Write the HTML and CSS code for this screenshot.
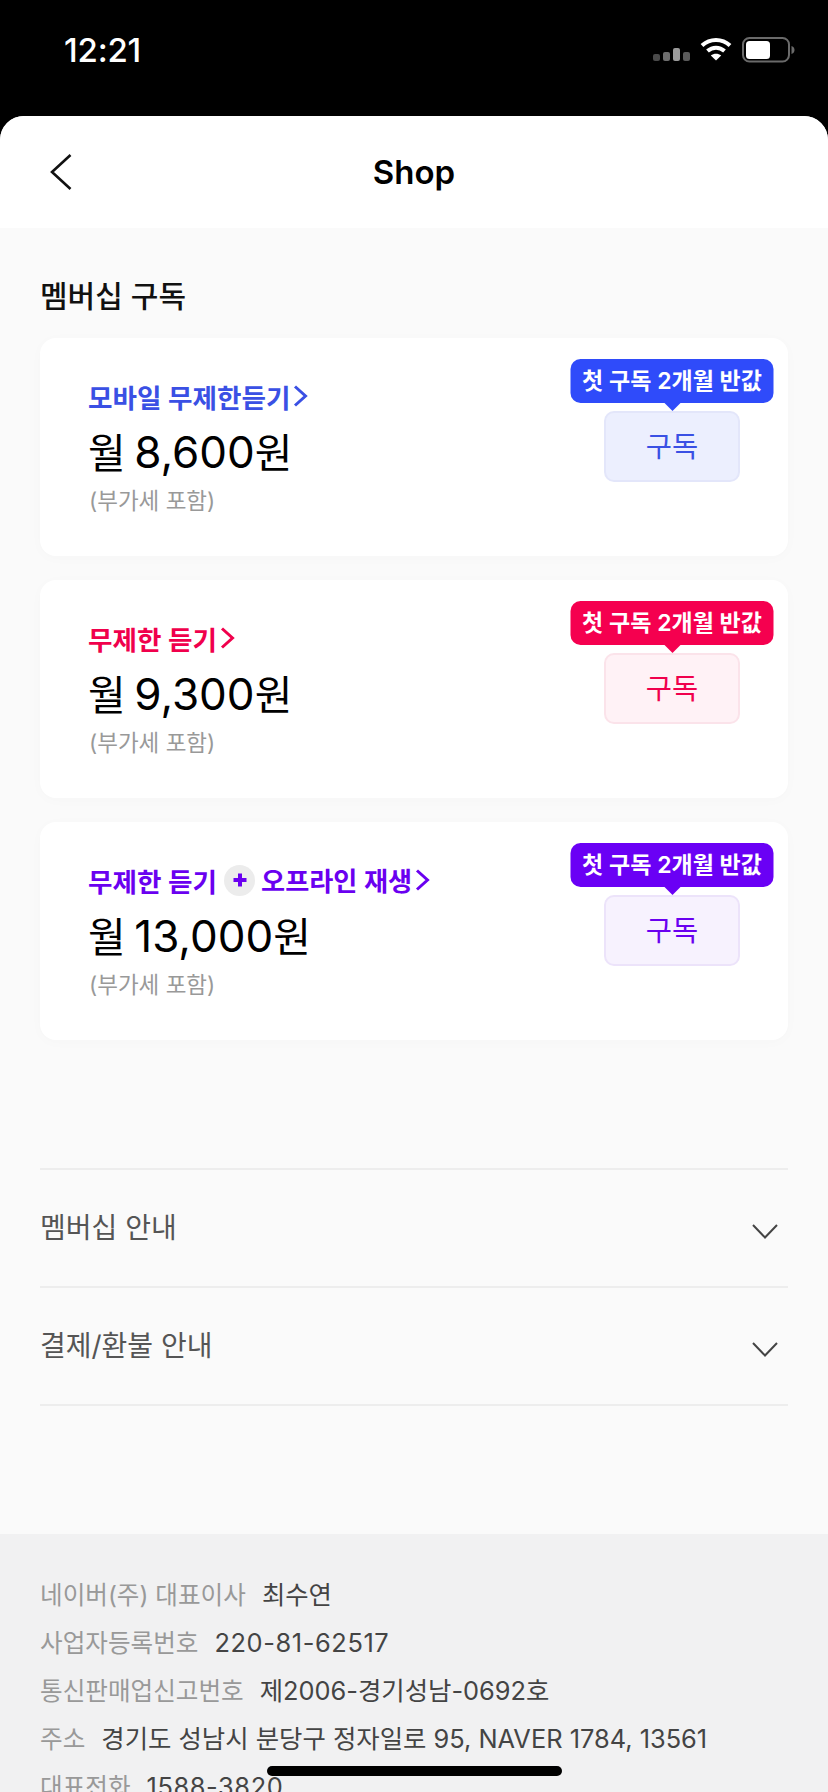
FILE: index.html
```html
<!DOCTYPE html>
<html lang="ko">
<head>
<meta charset="utf-8">
<title>Shop</title>
<link rel="stylesheet" href="styles.css">
</head>
<body>
<div class="phone">
  <div class="status">
    <span class="time">12:21</span>
    <div class="status-icons">
      <svg class="signal" width="37" height="14" viewBox="0 0 37 14"><rect x="0" y="6" width="7" height="7" rx="2" fill="#4a4a4a"/><rect x="10" y="4" width="7" height="9" rx="2" fill="#6e6e6e"/><rect x="20" y="0" width="7" height="13" rx="2" fill="#9a9a9a"/><rect x="30" y="4" width="7" height="9" rx="2" fill="#5a5a5a"/></svg>
      <svg class="wifi" width="32" height="24" viewBox="0 0 32 24"><path d="M2 8.5C10 1 22 1 30 8.5" fill="none" stroke="#fff" stroke-width="4"/><path d="M7.5 14C12.5 9.5 19.5 9.5 24.5 14" fill="none" stroke="#fff" stroke-width="4"/><path d="M16 23.5L10.8 18.6C13.8 16 18.2 16 21.2 18.6Z" fill="#fff"/></svg>
      <svg class="battery" width="53" height="26" viewBox="0 0 53 26"><rect x="1" y="1" width="46" height="23.5" rx="6.5" fill="none" stroke="#6a6a6a" stroke-width="2"/><rect x="4" y="4" width="24" height="18" rx="3.5" fill="#fff"/><path d="M49.5 9C52 10 52.5 11.5 52.5 13S52 16 49.5 17Z" fill="#6a6a6a"/></svg>
    </div>
  </div>
  <div class="sheet">
    <header class="nav">
      <svg class="back" width="22" height="36" viewBox="0 0 22 36"><path d="M20.5 1L2 18L20.5 35" fill="none" stroke="#111" stroke-width="2.6"/></svg>
      <h1 class="nav-title">Shop</h1>
    </header>
    <main class="content">
      <h2 class="section-title">멤버십 구독</h2>
      <section class="card card-blue">
        <div class="info">
          <a class="plan">모바일 무제한듣기<svg class="more" width="15" height="24" viewBox="0 0 15 24"><path d="M2 2.5L12.5 12L2 21.5" fill="none" stroke="currentColor" stroke-width="3"/></svg></a>
          <p class="price">월 <span class="amount">8,600</span>원</p>
          <p class="vat">(부가세 포함)</p>
        </div>
        <div class="action">
          <span class="badge">첫 구독 2개월 반값</span>
          <button class="sub">구독</button>
        </div>
      </section>
      <section class="card card-red">
        <div class="info">
          <a class="plan">무제한 듣기<svg class="more" width="15" height="24" viewBox="0 0 15 24"><path d="M2 2.5L12.5 12L2 21.5" fill="none" stroke="currentColor" stroke-width="3"/></svg></a>
          <p class="price">월 <span class="amount">9,300</span>원</p>
          <p class="vat">(부가세 포함)</p>
        </div>
        <div class="action">
          <span class="badge">첫 구독 2개월 반값</span>
          <button class="sub">구독</button>
        </div>
      </section>
      <section class="card card-purple">
        <div class="info">
          <a class="plan">무제한 듣기<span class="plus"><svg width="14" height="14" viewBox="0 0 14 14"><path d="M7 0.5V13.5M0.5 7H13.5" stroke="currentColor" stroke-width="4"/></svg></span><span class="plan-rest">오프라인 재생</span><svg class="more" width="15" height="24" viewBox="0 0 15 24"><path d="M2 2.5L12.5 12L2 21.5" fill="none" stroke="currentColor" stroke-width="3"/></svg></a>
          <p class="price">월 <span class="amount">13,000</span>원</p>
          <p class="vat">(부가세 포함)</p>
        </div>
        <div class="action">
          <span class="badge">첫 구독 2개월 반값</span>
          <button class="sub">구독</button>
        </div>
      </section>
      <div class="accordion">
        <div class="acc-row"><span>멤버십 안내</span><svg width="26" height="15" viewBox="0 0 26 15"><path d="M1 1L13 13.5L25 1" fill="none" stroke="#444" stroke-width="2"/></svg></div>
        <div class="acc-row"><span>결제/환불 안내</span><svg width="26" height="15" viewBox="0 0 26 15"><path d="M1 1L13 13.5L25 1" fill="none" stroke="#444" stroke-width="2"/></svg></div>
      </div>
    </main>
    <footer class="footer">
      <p class="line"><span class="label">네이버(주) 대표이사</span><span class="value">최수연</span></p>
      <p class="line"><span class="label">사업자등록번호</span><span class="value num">220-81-62517</span></p>
      <p class="line"><span class="label">통신판매업신고번호</span><span class="value">제2006-경기성남-0692호</span></p>
      <p class="line"><span class="label">주소</span><span class="value">경기도 성남시 분당구 정자일로 95, NAVER 1784, 13561</span></p>
      <p class="line"><span class="label">대표전화</span><span class="value num">1588-3820</span></p>
    </footer>
  </div>
  <div class="home"></div>
</div>
</body>
</html>
```
FILE: styles.css
```css
* { box-sizing: border-box; }
html, body { margin: 0; padding: 0; background: #000; }
body { font-family: Inter, "Noto Sans CJK KR", sans-serif; }
p, h1, h2 { margin: 0; font-weight: inherit; }
.phone { position: relative; width: 828px; height: 1792px; overflow: hidden; background: #000; }

.status { height: 116px; display: flex; justify-content: space-between; padding: 32px 33px 0 64px; color: #fff; }
.time { font-size: 33px; line-height: 36px; font-weight: 500; letter-spacing: -0.2px; }
.status-icons { display: flex; align-items: flex-start; padding-top: 5px; }
.signal { margin-top: 11px; margin-right: 10px; }
.wifi { margin-right: 10px; }

.sheet { background: #fafafa; border-radius: 24px 24px 0 0; overflow: hidden; }
.nav { position: relative; height: 112px; background: #fff; display: flex; align-items: center; justify-content: center; }
.back { position: absolute; left: 50px; top: 38px; }
.nav-title { font-size: 33px; font-weight: 600; color: #000; line-height: 40px; margin-top: -1px; }

.content { padding: 0 40px; height: 1306px; }
.section-title { padding-top: 48px; font-size: 30px; line-height: 40px; font-weight: 500; color: #111; margin-bottom: 22px; }

.card { display: flex; justify-content: space-between; height: 218px; margin-bottom: 24px; padding: 40px 48px 0 48px; background: #fff; border-radius: 16px; box-shadow: 0 2px 14px rgba(0,0,0,.02); }
.card-blue { --accent: #2f4bfa; --text: #3a50e4; --tint: #eceffe; --edge: #e3e6fa; }
.card-red { --accent: #f5004f; --text: #f0004c; --tint: #fff2f6; --edge: #fbe3ea; }
.card-purple { --accent: #6a00f5; --text: #6a00f0; --tint: #f7f2fe; --edge: #ece3fa; }

.plan { display: flex; align-items: center; height: 36px; font-size: 26.6px; font-weight: 600; color: var(--text); white-space: pre; }
.plan-rest { font-size: 26.2px; }
.more { margin-left: 3px; }
.plus { width: 31px; height: 31px; margin: 0 6px 0 7px; border-radius: 50%; background: #ececec; display: flex; align-items: center; justify-content: center; }
.price { margin-top: 8px; font-size: 41px; line-height: 60px; color: #000; word-spacing: -3px; }
.amount { font-size: 44px; }
.vat { margin-top: 3px; font-size: 22.5px; line-height: 30px; color: #999; padding-left: 1px; }

.action { position: relative; width: 136px; padding-top: 33px; }
.sub { display: block; width: 136px; height: 71px; padding: 0 0 4px; border: 2px solid var(--edge); border-radius: 10px; background: var(--tint); color: var(--text); font: inherit; font-size: 28.5px; }
.badge { position: absolute; left: 50%; top: -19px; transform: translateX(-50%); height: 44px; width: 203px; border-radius: 10px; background: var(--accent); color: #fff; font-size: 23px; font-weight: 600; line-height: 45px; text-align: center; white-space: nowrap; }
.badge::after { content: ""; position: absolute; left: 50%; bottom: -8px; margin-left: -8px; border: 8px solid transparent; border-bottom: 0; border-top-color: var(--accent); }

.accordion { margin-top: 128px; border-top: 2px solid #ededed; }
.acc-row { display: flex; justify-content: space-between; align-items: center; height: 118px; padding: 0 10px 0 0; border-bottom: 2px solid #ededed; font-size: 28px; color: #555; }
.acc-row span { margin-top: -5px; }
.acc-row svg { margin-top: 6px; }

.footer { height: 258px; padding: 38px 40px 0; background: #f1f1f2; font-size: 24.6px; }
.line { display: flex; gap: 16px; height: 48px; line-height: 46px; white-space: nowrap; }
.label { color: #999; }
.value { color: #444; font-size: 25.4px; }
.num { letter-spacing: .6px; }

.home { position: absolute; left: 267px; top: 1766px; width: 295px; height: 10px; border-radius: 5px; background: #000; }
```
